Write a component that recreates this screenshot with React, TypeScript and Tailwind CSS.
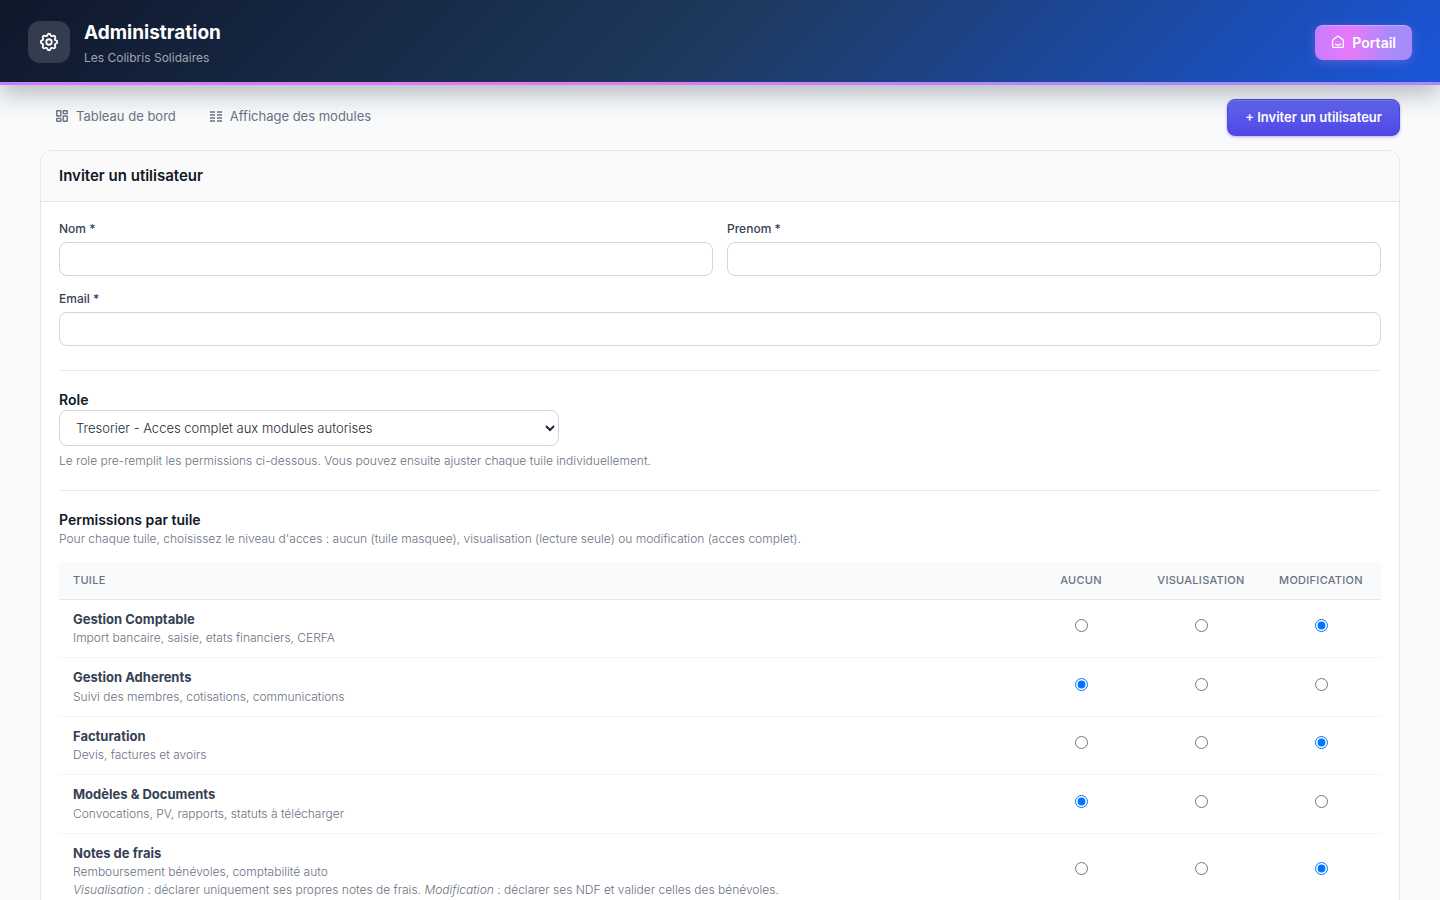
import { LayoutDashboard } from 'lucide-react';
import { HiOutlineCog } from 'react-icons/hi';

type Level = 'aucun' | 'visualisation' | 'modification';

type Tile = {
  id: string;
  name: string;
  description: string;
  level: Level;
  hints?: { term: string; text: string }[];
};

const LEVELS: { value: Level; label: string }[] = [
  { value: 'aucun', label: 'Aucun' },
  { value: 'visualisation', label: 'Visualisation' },
  { value: 'modification', label: 'Modification' },
];

const TILES: Tile[] = [
  {
    id: 'comptable',
    name: 'Gestion Comptable',
    description: 'Import bancaire, saisie, etats financiers, CERFA',
    level: 'modification',
  },
  {
    id: 'adherents',
    name: 'Gestion Adherents',
    description: 'Suivi des membres, cotisations, communications',
    level: 'aucun',
  },
  {
    id: 'facturation',
    name: 'Facturation',
    description: 'Devis, factures et avoirs',
    level: 'modification',
  },
  {
    id: 'documents',
    name: 'Modèles & Documents',
    description: 'Convocations, PV, rapports, statuts à télécharger',
    level: 'aucun',
  },
  {
    id: 'frais',
    name: 'Notes de frais',
    description: 'Remboursement bénévoles, comptabilité auto',
    level: 'modification',
    hints: [
      { term: 'Visualisation', text: ': déclarer uniquement ses propres notes de frais. ' },
      { term: 'Modification', text: ': déclarer ses NDF et valider celles des bénévoles.' },
    ],
  },
];

function HomeIcon() {
  return (
    <svg
      className="size-3.5"
      viewBox="0 0 14 14"
      fill="none"
      stroke="currentColor"
      strokeWidth="1.3"
      strokeLinejoin="round"
      strokeLinecap="round"
      aria-hidden="true"
    >
      <path d="M1.6 6c0-.6.3-1.1.7-1.5l3.6-2.8c.6-.5 1.600-.5 2.200 0l3.600 2.800c.4.4.7.9.7 1.500v5.200c0 .7-.5 1.200-1.200 1.200H2.800c-.7 0-1.200-.5-1.200-1.200z" />
      <path d="M4.500 9.200c1.400.9 3.600.9 5 0" />
    </svg>
  );
}

function ModulesIcon() {
  return (
    <svg className="size-3.5" viewBox="0 0 14 14" stroke="currentColor" strokeWidth="1.6" aria-hidden="true">
      <path d="M1 3h5M1 6h5M1 9h5M1 12h5M8 3h5M8 6h5M8 9h5M8 12h5" />
    </svg>
  );
}

function Header() {
  return (
    <header className="relative shadow-[0_8px_24px_rgba(15,23,42,0.3)]">
      <div className="flex items-center justify-between bg-[linear-gradient(135deg,#0f172a_0%,#1e3a5f_50%,#1a56db_100%)] px-7 pt-[19px] pb-[17px]">
        <div className="flex items-center gap-3.5">
          <div className="flex size-[42px] items-center justify-center rounded-xl bg-white/15 text-white">
            <HiOutlineCog className="size-[22px]" />
          </div>
          <div>
            <h1 className="text-[19px] leading-7 font-bold text-white">Administration</h1>
            <p className="mt-1 text-xs leading-[14px] text-white/60">Les Colibris Solidaires</p>
          </div>
        </div>
        <a
          href="#portail"
          className="flex items-center gap-[7px] rounded-lg bg-[linear-gradient(90deg,#c77dff_0%,#e879f9_35%,#a78bfa_80%)] px-4 py-[7px] text-sm leading-[21px] font-semibold text-white shadow-[0_2px_10px_rgba(199,125,255,0.35),inset_0_1px_0_rgba(255,255,255,0.25)]"
        >
          <HomeIcon />
          Portail
        </a>
      </div>
      <div className="h-[3px] bg-[linear-gradient(90deg,#c77dff_0%,#e879f9_35%,#a78bfa_80%)]" />
    </header>
  );
}

function Toolbar() {
  return (
    <div className="flex items-start justify-between">
      <nav className="flex gap-[3px] text-[13px] leading-5 text-gray-500">
        <a href="#tableau" className="flex items-center gap-[7px] px-[15px] py-[7px]">
          <LayoutDashboard className="size-3.5" strokeWidth={2.4} />
          Tableau de bord
        </a>
        <a href="#modules" className="flex items-center gap-[7px] px-[15px] py-[7px]">
          <ModulesIcon />
          Affichage des modules
        </a>
      </nav>
      <button
        type="button"
        className="rounded-lg border border-[#4f46e5] bg-linear-to-b from-[#6366f1] to-[#4f46e5] px-[17px] py-2 text-[13px] leading-[19px] font-semibold text-white shadow-[0_1px_3px_rgba(79,70,229,0.4),inset_0_1px_0_rgba(255,255,255,0.15)]"
      >
        + Inviter un utilisateur
      </button>
    </div>
  );
}

function Field({ id, label, type = 'text' }: { id: string; label: string; type?: string }) {
  return (
    <div>
      <label htmlFor={id} className="mb-1 block text-xs leading-[18px] font-medium text-gray-700">
        {label}
      </label>
      <input
        id={id}
        type={type}
        className="block h-[34px] w-full rounded-lg border border-gray-300 bg-white px-3 text-sm"
      />
    </div>
  );
}

function PermissionsTable() {
  return (
    <table className="mt-3.5 w-full border-collapse text-left">
      <thead>
        <tr className="border-b border-gray-200 bg-[#f9fafb] text-[11px] leading-normal tracking-wide text-gray-500 uppercase">
          <th className="px-3.5 py-2.5 font-medium">Tuile</th>
          {LEVELS.map((level) => (
            <th key={level.value} className="w-[120px] py-2.5 text-center font-medium">
              {level.label}
            </th>
          ))}
        </tr>
      </thead>
      <tbody>
        {TILES.map((tile) => (
          <tr key={tile.id} className="border-b border-gray-100">
            <td className="px-3.5 py-2.5">
              <div className="text-[13px] leading-normal font-bold text-gray-700">{tile.name}</div>
              <div className="text-xs leading-normal font-light text-gray-500">{tile.description}</div>
              {tile.hints && (
                <div className="text-xs leading-normal font-light text-gray-500">
                  {tile.hints.map((hint) => (
                    <span key={hint.term}>
                      <em>{hint.term}</em> {hint.text}
                    </span>
                  ))}
                </div>
              )}
            </td>
            {LEVELS.map((level) => (
              <td key={level.value} className="pb-1 text-center">
                <input
                  type="radio"
                  name={`perm-${tile.id}`}
                  value={level.value}
                  defaultChecked={tile.level === level.value}
                  aria-label={`${tile.name} : ${level.label}`}
                />
              </td>
            ))}
          </tr>
        ))}
      </tbody>
    </table>
  );
}

export default function App() {
  return (
    <div className="min-h-screen bg-[#f8fafc] font-['Inter','Liberation_Sans',sans-serif] text-gray-800">
      <Header />
      <main className="px-10 pt-3.5 pb-10">
        <Toolbar />
        <form className="mt-3.5 overflow-hidden rounded-xl border border-gray-200 bg-white shadow-xs">
          <div className="border-b border-gray-200 bg-[#fafafa] px-[18px] py-3.5">
            <h2 className="text-[15px] leading-[22px] font-semibold text-gray-900">Inviter un utilisateur</h2>
          </div>
          <div className="p-[18px]">
            <div className="grid grid-cols-2 gap-3.5">
              <Field id="nom" label="Nom *" />
              <Field id="prenom" label="Prenom *" />
              <div className="col-span-2">
                <Field id="email" label="Email *" type="email" />
              </div>
            </div>

            <hr className="mt-6 mb-[18px] border-gray-200" />

            <label htmlFor="role" className="block text-sm leading-[21px] font-semibold text-gray-900">
              Role
            </label>
            <select
              id="role"
              className="block h-9 w-[500px] max-w-full rounded-lg border border-gray-300 bg-white px-3 text-[13px] font-light text-gray-800"
            >
              <option>Tresorier - Acces complet aux modules autorises</option>
            </select>
            <p className="mt-1.5 text-xs leading-[18px] font-light text-gray-500">
              Le role pre-remplit les permissions ci-dessous. Vous pouvez ensuite ajuster chaque tuile individuellement.
            </p>

            <hr className="mt-5 mb-[18px] border-gray-200" />

            <h3 className="text-sm leading-[21px] font-semibold text-gray-900">Permissions par tuile</h3>
            <p className="text-xs leading-[18px] font-light text-gray-500">
              Pour chaque tuile, choisissez le niveau d'acces : aucun (tuile masquee), visualisation (lecture seule) ou
              modification (acces complet).
            </p>
            <PermissionsTable />
          </div>
        </form>
      </main>
    </div>
  );
}
